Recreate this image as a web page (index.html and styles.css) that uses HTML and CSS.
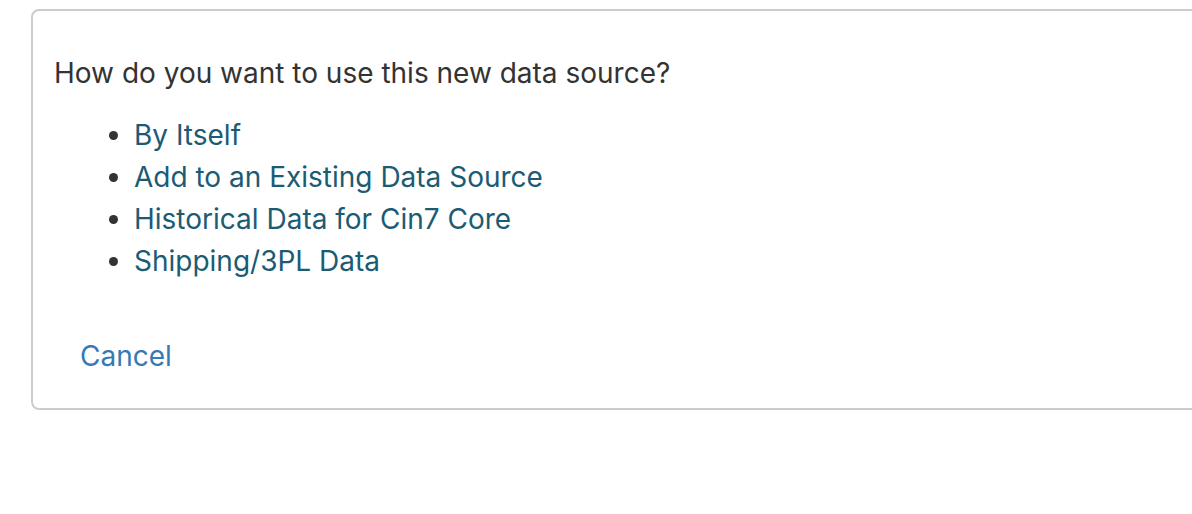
FILE: index.html
```html
<!DOCTYPE html>
<html>
<head>
<meta charset="utf-8">
<link rel="stylesheet" href="styles.css">
</head>
<body>
<div class="panel">
  <p class="question">How do you want to use this new data source?</p>
  <ul class="options">
    <li><a href="#">By Itself</a></li>
    <li><a href="#">Add to an Existing Data Source</a></li>
    <li><a href="#">Historical Data for Cin7 Core</a></li>
    <li><a href="#">Shipping/3PL Data</a></li>
  </ul>
  <div class="actions"><a class="cancel" href="#">Cancel</a></div>
</div>
</body>
</html>
```
FILE: styles.css
```css
html, body {
  margin: 0;
  padding: 0;
  background: #fff;
  overflow: hidden;
}
body {
  font-family: Inter, "Noto Sans", sans-serif;
  color: #333;
  font-size: 28px;
  width: 1192px;
  height: 514px;
}
.panel {
  margin: 9px 0 0 31px;
  width: 1200px;
  height: 401px;
  border: 2px solid #cccccc;
  border-radius: 8px;
  box-sizing: border-box;
  padding: 45px 0 0 21px;
}
.question {
  margin: 0;
  line-height: 34px;
}
.options {
  margin: 24px 0 0 0;
  padding: 0 0 0 80px;
  line-height: 42px;
}
.options a {
  color: #1b5b73;
  text-decoration: none;
}
.actions {
  margin-top: 57px;
  padding-left: 26px;
  line-height: 34px;
}
.cancel {
  color: #337ab7;
  text-decoration: none;
}
```
